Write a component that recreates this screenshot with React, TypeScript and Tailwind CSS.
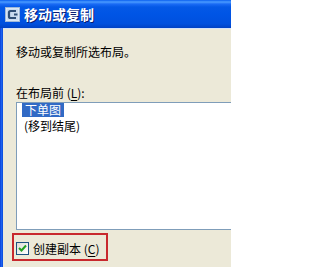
import React from "react";

export default function App() {
  return (
    <div className="w-[231px] h-[267px] overflow-hidden flex flex-col text-[12px] text-black font-['SimSun','Noto_Sans_CJK_SC',sans-serif]">
      {/* Title bar */}
      <div className="h-[28px] shrink-0 flex items-center pl-[5px] bg-[linear-gradient(180deg,#0A5FEF_0px,#4A9BFF_2px,#1A6BF5_4px,#0458E6_7px,#0055E5_50%,#0050DE_85%,#0041C4_100%)]">
        <svg width="15" height="15" viewBox="0 0 15 15" className="shrink-0">
          <rect x="0.5" y="0.5" width="14" height="14" fill="#E9F1FB" stroke="#9FB8D8" />
          <rect x="1.5" y="1.5" width="12" height="12" fill="#C9DBF0" />
          <path d="M11 4 H5.5 Q4 4 4 5.5 V9.5 Q4 11 5.5 11 H11" fill="none" stroke="#2F4F77" strokeWidth="2.2" />
          <path d="M9 7.5 L12.5 7.5" stroke="#2F4F77" strokeWidth="2" />
        </svg>
        <span className="ml-[4px] text-white font-bold text-[14px] leading-[16px] [text-shadow:1px_1px_0_#0A1E72]">
          移动或复制
        </span>
      </div>
      {/* Body */}
      <div className="flex flex-1">
        <div className="w-[3px] shrink-0 bg-[linear-gradient(90deg,#0B3FD6,#1D62EE,#0849D9)]" />
        <div className="flex-1 bg-[#ECE9D8] pl-[13px] pt-[15px] flex flex-col border-t border-[#D6E3F8]">
          <p className="leading-[16px]">移动或复制所选布局。</p>
          <p className="mt-[25px] leading-[16px]">
            在布局前 (<span className="underline underline-offset-2">L</span>):
          </p>
          <div className="mt-[1px] w-[230px] h-[128px] shrink-0 bg-white border border-[#7F9DB9] pl-[5px] flex flex-col items-start">
            <div className="h-[14px] px-[3px] bg-[#316AC5] text-white leading-[14px]">下单图</div>
            <div className="mt-[2px] pl-[2px] leading-[14px]">(移到结尾)</div>
          </div>
          <div className="mt-[3px] -ml-[4px] w-[96px] h-[28px] border-2 border-[#C8282D] flex items-start pt-[7px] pl-[2px]">
            <div className="w-[13px] h-[13px] shrink-0 border border-[#1C5180] bg-[linear-gradient(135deg,#DCDCD7,#FFFFFF)] flex items-center justify-center">
              <svg width="9" height="9" viewBox="0 0 9 9">
                <path d="M1 4 L3.5 6.5 L8 1.5" fill="none" stroke="#21A121" strokeWidth="2" />
              </svg>
            </div>
            <span className="ml-[4px] leading-[14px]">
              创建副本 (<span className="underline underline-offset-2">C</span>)
            </span>
          </div>
        </div>
      </div>
    </div>
  );
}
